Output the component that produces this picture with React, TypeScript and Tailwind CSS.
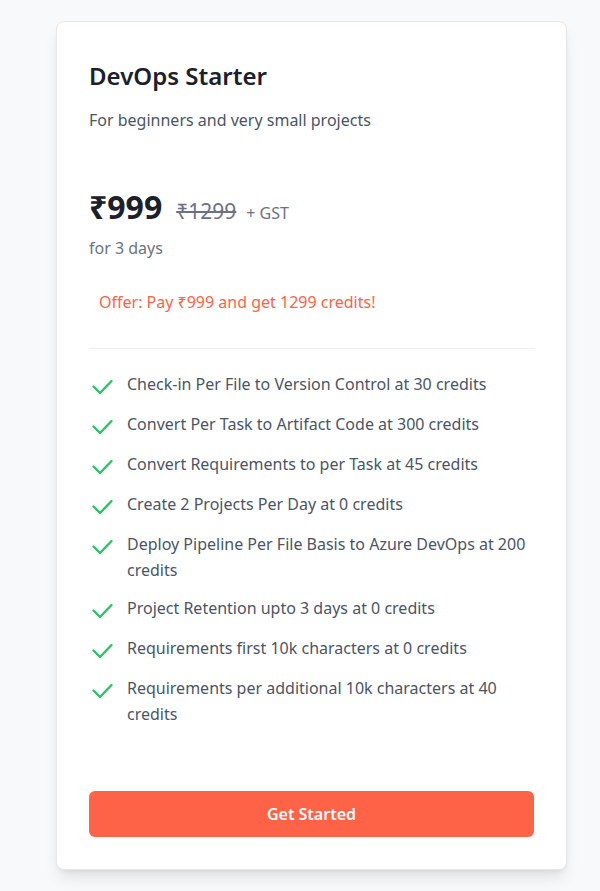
import { Fragment } from "react"

const features = [
  "Check-in Per File to Version Control at 30 credits",
  "Convert Per Task to Artifact Code at 300 credits",
  "Convert Requirements to per Task at 45 credits",
  "Create 2 Projects Per Day at 0 credits",
  "Deploy Pipeline Per File Basis to Azure DevOps at 200 credits",
  "Project Retention upto 3 days at 0 credits",
  "Requirements first 10k characters at 0 credits",
  "Requirements per additional 10k characters at 40 credits",
]

function CheckIcon() {
  return (
    <svg viewBox="0 0 24 24" className="mt-1 h-6 w-6 shrink-0" fill="none">
      <path d="M4.5 11.5 11 18 22.5 6" stroke="#22c55e" strokeWidth="2.3" strokeLinecap="round" strokeLinejoin="round" />
    </svg>
  )
}

export default function App() {
  return (
    <div className="min-h-[891px] bg-[#f8f9fa] pl-[56px] pt-[21px] font-['Noto_Sans',sans-serif]">
      <div className="w-[511px] rounded-lg border border-[#e5e7eb] bg-white px-8 pt-[38px] pb-8 shadow-lg">
        {/* Heading */}
        <h2 className="text-2xl font-semibold text-[#1a202c]">DevOps Starter</h2>
        <p className="mt-[16px] text-base text-[#4b5563]">For beginners and very small projects</p>

        {/* Price */}
        <div className="mt-[57px] flex items-baseline">
          <span className="text-[32px] leading-9 font-bold text-[#1a202c]">₹999</span>
          <span className="ml-3.5 text-[21px] text-[#6b7280] line-through">₹1299</span>
          <span className="ml-2.5 text-base text-[#6b7280]">+ GST</span>
        </div>
        <p className="mt-[8px] text-base text-[#6b7280]">for 3 days</p>

        <p className="mt-[30px] px-2.5 text-base text-[#ff6347]">Offer: Pay ₹999 and get 1299 credits!</p>

        <div className="mt-[34px] h-px bg-[#eceef1]" />

        {/* Features */}
        <ul className="mt-[22px] space-y-3">
          {features.map((f) => (
            <Fragment key={f}>
              <li className="flex items-start gap-3">
                <CheckIcon />
                <span className="ml-0.5 text-base leading-[26px] text-[#4b5563]">{f}</span>
              </li>
            </Fragment>
          ))}
        </ul>

        <button className="mt-[64px] h-[46px] w-full rounded-md bg-[#ff6347] text-base font-semibold text-white">
          Get Started
        </button>
      </div>
    </div>
  )
}
